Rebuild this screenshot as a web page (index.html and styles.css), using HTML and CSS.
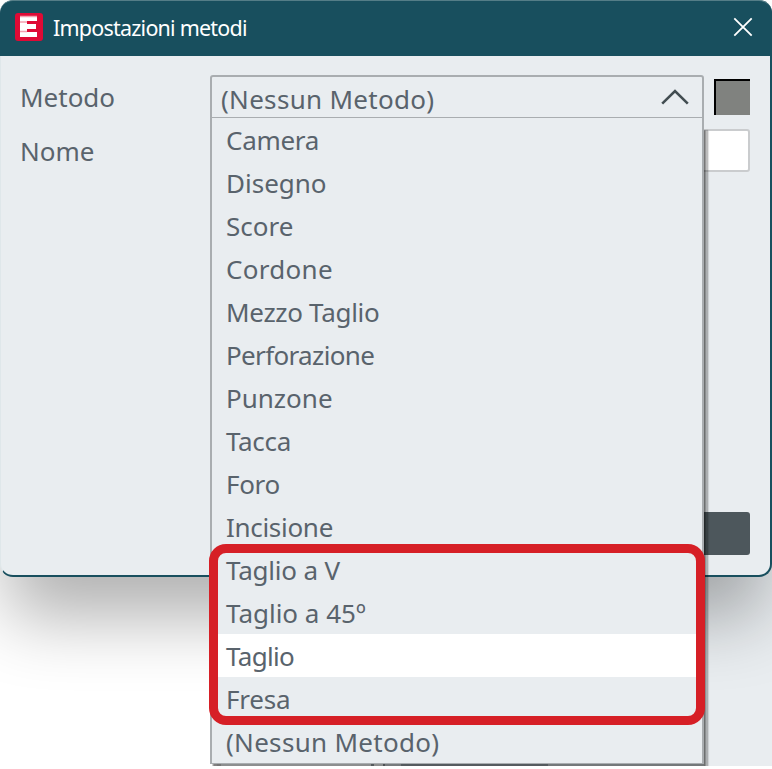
FILE: index.html
```html
<!DOCTYPE html>
<html lang="it">
<head>
<meta charset="utf-8">
<title>Impostazioni metodi</title>
<link rel="stylesheet" href="styles.css">
</head>
<body>
<div class="stage">
  <div class="backdrop"></div>
  <section class="dialog">
    <header class="titlebar">
      <svg class="logo" width="28" height="28" viewBox="0 0 28 28"><rect width="28" height="28" rx="3" fill="#df0a35"/><path d="M5 4H22V8H12V11H21V16H12V19H22V24H5Z" fill="#fff"/><path d="M5 3.5H22M5 9H12M5 18.5H12" stroke="#f3a0b0" stroke-width="1.5"/></svg>
      <h1>Impostazioni metodi</h1>
      <svg class="close" width="20" height="20" viewBox="0 0 20 20"><path d="M1.3 1.3L18.7 18.7M18.7 1.3L1.3 18.7" stroke="#fff" stroke-width="1.8" fill="none"/></svg>
    </header>
    <div class="form">
      <label>Metodo</label>
      <div class="row">
        <div class="select"><span>(Nessun Metodo)</span>
          <svg width="28" height="16" viewBox="0 0 28 16"><path d="M1.2 14.6L14 2L26.8 14.6" fill="none" stroke="#424d51" stroke-width="2.6"/></svg>
        </div>
        <div class="swatch"></div>
      </div>
      <label>Nome</label>
      <div class="field"></div>
    </div>
    <div class="actions"><div class="button"></div></div>
  </section>
  <div class="understrip"></div>
  <ul class="menu">
    <li class="tight">Camera</li>
    <li>Disegno</li>
    <li>Score</li>
    <li class="loose">Cordone</li>
    <li class="tight">Mezzo Taglio</li>
    <li class="tighter">Perforazione</li>
    <li>Punzone</li>
    <li class="tight">Tacca</li>
    <li class="tight">Foro</li>
    <li class="tight">Incisione</li>
    <li class="snug">Taglio a V</li>
    <li>Taglio a 45º</li>
    <li class="tighter active">Taglio</li>
    <li class="snug">Fresa</li>
    <li class="loose">(Nessun Metodo)</li>
  </ul>
  <div class="highlight"></div>
</div>
</body>
</html>
```
FILE: styles.css
```css
* { box-sizing: border-box; }
body { margin: 0; background: #fff; font-family: "Noto Sans", "Open Sans", sans-serif; color: #59636c; }
.stage { position: relative; width: 772px; height: 769px; overflow: hidden; }
.backdrop { position: absolute; left: 704px; top: 500px; right: 0; height: 266px; background: #e9edf0; }
.dialog {
  position: relative; width: 772px; height: 577px; overflow: visible;
  display: flex; flex-direction: column;
  background: #e9edf0; border: 2px solid #184f5e; border-left: 1px solid #dfe7ea; border-top: 0;
  border-radius: 13px;
  box-shadow: 0 48px 70px -8px rgba(0, 0, 0, .31);
}
.titlebar {
  height: 56px; margin: 0 -2px 0 -1px; padding: 0 19px 3px 15px; flex: none;
  display: flex; align-items: center; background: #184f5e;
  border-top: 1px solid #547d87; border-radius: 13px 13px 0 0;
}
.close { margin-top: -1px; }
h1 { margin: 2px auto 0 10px; font-size: 21.5px; font-weight: 400; line-height: 30px; color: #fff; letter-spacing: -.78px; }
.form {
  display: grid; grid-template-columns: 190px 540px; grid-template-rows: 43px 43px; row-gap: 11px;
  margin: 19px 0 0 19px; font-size: 26px; line-height: 45px;
}
.row { display: flex; justify-content: space-between; align-items: flex-start; }
.select {
  width: 494px; height: 43px; padding: 0 13px 0 9px; display: flex; align-items: center; justify-content: space-between;
  border: 2px solid #a9adb0; border-bottom-width: 1px; border-radius: 3px 3px 0 0;
}
.select span { padding-top: 5px; letter-spacing: .3px; }
.swatch { width: 36px; height: 36px; margin-top: 4px; background: #80827f; border: solid #000; border-width: 2px 0 0 2px; }
.field { height: 43px; background: #fff; border: 2px solid #caccce; border-radius: 3px; }
.actions { margin: auto 20px 20px 0; display: flex; justify-content: flex-end; }
.button { width: 250px; height: 43px; border-radius: 3px; background: #4d575c; }
.menu {
  position: absolute; left: 210px; top: 118px; width: 494px; height: 646px; margin: 0; padding: 0; list-style: none;
  background: #e9edf0; border: 2px solid #a9adb0; border-top: 0; border-bottom-width: 1px;
  box-shadow: 2px 12px 0 -0.5px rgba(0,0,0,.37), 4px 12px 1px rgba(0,0,0,.2), 6px 12px 1px -1px rgba(0,0,0,.08);
  clip-path: inset(0 -9px -2px 0);
}
.menu li { height: 43px; padding-left: 14px; font-size: 26px; line-height: 45px; white-space: nowrap; }
.menu .snug { letter-spacing: -.2px; }
.menu .tight { letter-spacing: -.3px; }
.menu .tighter { letter-spacing: -.65px; }
.menu .loose { letter-spacing: .3px; }
.menu .active { background: #fff; }
.highlight { position: absolute; left: 209px; top: 544px; width: 496px; height: 181px; border: 9px solid #d61f26; border-radius: 17px; }
.understrip {
  position: absolute; left: 221px; top: 764px; width: 483px; height: 2px; z-index: 1;
  background: linear-gradient(90deg, #8c8e8f 150px, #555a5d 150px 153px, #8d8f8f 153px 162px, #4d5154 162px 164px, #777b7d 164px 180px, #555b5f 180px 327px, #74787a 327px);
}
```
